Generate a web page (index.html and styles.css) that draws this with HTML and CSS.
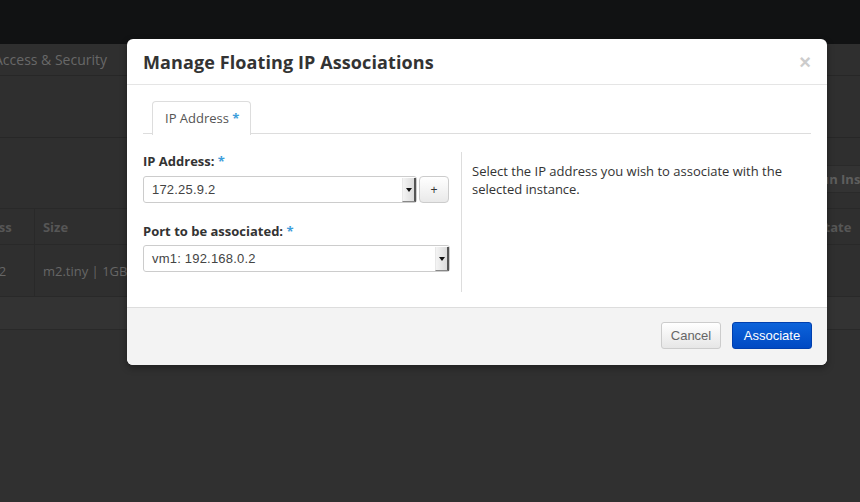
FILE: index.html
```html
<!DOCTYPE html>
<html>
<head>
<meta charset="utf-8">
<link rel="stylesheet" href="styles.css">
</head>
<body>
<div class="topbar"></div>
<div class="page">
  <div class="breadcrumb"><span class="crumb">Access &amp; Security</span></div>
  <div class="page-header"></div>
  <div class="toolbar"><span class="bg-btn">Run Instances</span></div>
  <div class="table">
    <div class="tr th">
      <div class="td c1">IP Address</div>
      <div class="td c2">Size</div>
      <div class="td c3"></div>
      <div class="td c4">State</div>
    </div>
    <div class="tr row">
      <div class="td c1">172.25.9.2</div>
      <div class="td c2">m2.tiny | 1GB</div>
      <div class="td c3"></div>
      <div class="td c4"></div>
    </div>
    <div class="tfoot"></div>
  </div>
</div>

<div class="modal">
  <div class="modal-header">
    <h3 class="modal-title">Manage Floating IP Associations</h3>
    <span class="close">&times;</span>
  </div>
  <div class="modal-body">
    <div class="tabs">
      <div class="tab">IP Address&nbsp;<span class="req">*</span></div>
    </div>
    <div class="form-row">
      <div class="left-col">
        <label class="label">IP Address: <span class="req">*</span></label>
        <div class="input-group">
          <div class="select select-short">
            <span class="select-value">172.25.9.2</span>
            <span class="select-arrow"><span class="tri"></span></span>
          </div>
          <span class="plus-btn">+</span>
        </div>
        <label class="label label-port">Port to be associated: <span class="req">*</span></label>
        <div class="select select-full">
          <span class="select-value">vm1: 192.168.0.2</span>
          <span class="select-arrow"><span class="tri"></span></span>
        </div>
      </div>
      <div class="right-col">
        <p class="help">Select the IP address you wish to associate with the selected instance.</p>
      </div>
    </div>
  </div>
  <div class="modal-footer">
    <span class="btn btn-cancel">Cancel</span>
    <span class="btn btn-primary">Associate</span>
  </div>
</div>
</body>
</html>
```

FILE: styles.css
```css
html, body {
  margin: 0;
  padding: 0;
}
body {
  width: 860px;
  height: 502px;
  overflow: hidden;
  background: #303030;
  font-family: "Open Sans", "Liberation Sans", sans-serif;
  position: relative;
}
.topbar {
  height: 44px;
  background: #111213;
}
.page {
  background: #2f2f2f;
}
.breadcrumb {
  height: 31px;
  border-bottom: 1px solid #272727;
  display: flex;
  align-items: center;
  font-size: 14px;
  color: #686868;
}
.crumb {
  margin-left: -6px;
}
.page-header {
  height: 61px;
  border-bottom: 1px solid #272727;
}
.toolbar {
  height: 70px;
  display: flex;
  align-items: center;
  position: relative;
}
.bg-btn {
  margin-left: 801px;
  margin-top: 12px;
  height: 26px;
  padding: 0 10px;
  border: 1px solid #2a2a2a;
  background: #333333;
  font-size: 13px;
  font-weight: 700;
  color: #5e5e5e;
  display: flex;
  align-items: center;
  white-space: nowrap;
}
.table {
  margin-left: -66px;
  width: 1000px;
}
.tr {
  display: flex;
  border-top: 1px solid #292929;
}
.th {
  height: 35px;
  font-weight: 700;
  font-size: 13px;
  color: #565656;
}
.row {
  height: 51px;
  font-size: 13px;
  color: #666666;
}
.td {
  display: flex;
  align-items: center;
  padding: 0 8px;
  box-sizing: border-box;
  white-space: nowrap;
}
.c1 { width: 102px; border-right: 1px solid #292929; padding-left: 10px; }
.c2 { width: 200px; }
.c3 { width: 584px; }
.c4 { width: 126px; }
.tfoot {
  height: 32px;
  border-top: 1px solid #292929;
  border-bottom: 1px solid #292929;
  background: #333333;
}

/* modal */
.modal {
  position: absolute;
  left: 127px;
  top: 39px;
  width: 700px;
  background: #ffffff;
  border-radius: 6px;
  box-shadow: 0 3px 7px rgba(0, 0, 0, 0.35);
  overflow: hidden;
}
.modal-header {
  height: 45px;
  border-bottom: 1px solid #e5e5e5;
  display: flex;
  align-items: center;
  justify-content: space-between;
  padding: 0 16px;
}
.modal-title {
  margin: 0;
  font-size: 18px;
  font-weight: 700;
  color: #333333;
  letter-spacing: 0.1px;
}
.close {
  font-family: "Liberation Sans", sans-serif;
  font-size: 20px;
  font-weight: 700;
  color: #cccccc;
  line-height: 20px;
}
.modal-body {
  padding: 15px 16px 15px 16px;
}
.tabs {
  height: 33px;
  border-bottom: 1px solid #dddddd;
  display: flex;
  padding-left: 9px;
}
.tab {
  box-sizing: border-box;
  border: 1px solid #dddddd;
  border-bottom: none;
  border-radius: 4px 4px 0 0;
  background: #ffffff;
  padding: 0 11px 1px 12px;
  display: flex;
  align-items: center;
  font-size: 13px;
  color: #555555;
  position: relative;
  top: 1px;
  height: 34px;
}
.req {
  color: #3d9edb;
  font-weight: 700;
}
.form-row {
  display: flex;
  margin-top: 18px;
}
.left-col {
  width: 307px;
  padding-right: 11px;
  padding-bottom: 20px;
}
.right-col {
  flex: 1;
  border-left: 1px solid #dddddd;
  padding-left: 10px;
}
.label {
  display: block;
  font-size: 13px;
  line-height: 18px;
  font-weight: 700;
  color: #333333;
  margin-bottom: 6px;
}
.label-port {
  margin-top: 19px;
  margin-bottom: 5px;
}
.input-group {
  display: flex;
  gap: 2px;
}
.select {
  height: 27px;
  box-sizing: border-box;
  border: 1px solid #cccccc;
  border-radius: 3px;
  display: flex;
  align-items: center;
  position: relative;
  font-family: "Liberation Sans", sans-serif;
  font-size: 13px;
  color: #444444;
  background: #ffffff;
}
.select-short { width: 274px; }
.select-full { width: 307px; }
.select-value {
  padding-left: 8px;
  letter-spacing: 0.2px;
}
.select-arrow {
  position: absolute;
  right: 0;
  top: 1px;
  bottom: 0;
  width: 11px;
  background: linear-gradient(to right, #f4f4f4, #dcdcdc);
  border-right: 2px solid #555555;
  border-bottom: 1px solid #888888;
  border-left: 1px solid #e8e8e8;
  display: flex;
  align-items: center;
  justify-content: center;
}
.tri {
  width: 0;
  height: 0;
  border-left: 3px solid transparent;
  border-right: 3px solid transparent;
  border-top: 4px solid #111111;
}
.plus-btn {
  width: 30px;
  height: 27px;
  box-sizing: border-box;
  border: 1px solid #cccccc;
  border-radius: 4px;
  background: linear-gradient(#ffffff, #e9e9e9);
  display: flex;
  align-items: center;
  justify-content: center;
  font-family: "Liberation Sans", sans-serif;
  font-size: 12px;
  color: #333333;
}
.help {
  margin: 10px 0 0 0;
  font-size: 13px;
  line-height: 18px;
  color: #333333;
}
.modal-footer {
  border-top: 1px solid #dddddd;
  background: #f3f3f3;
  padding: 14px 15px 16px 15px;
  display: flex;
  justify-content: flex-end;
  gap: 11px;
}
.btn {
  height: 27px;
  box-sizing: border-box;
  border-radius: 3px;
  display: flex;
  align-items: center;
  justify-content: center;
  font-family: "Liberation Sans", sans-serif;
  font-size: 13px;
}
.btn-cancel {
  width: 60px;
  border: 1px solid #cccccc;
  background: linear-gradient(#ffffff, #e6e6e6);
  color: #666666;
}
.btn-primary {
  width: 80px;
  border: 1px solid #003fae;
  background: linear-gradient(#0c63da, #0049c3);
  color: #ffffff;
}
```
